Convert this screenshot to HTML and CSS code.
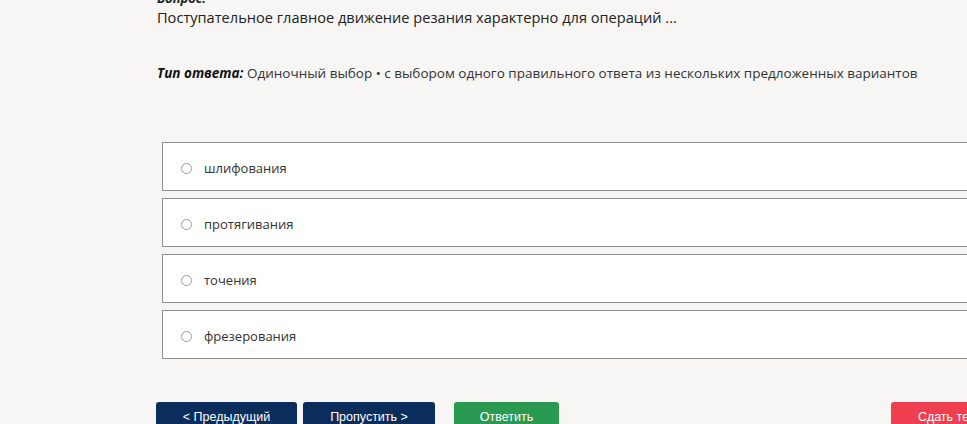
FILE: index.html
```html
<!DOCTYPE html>
<html lang="ru">
<head>
<meta charset="utf-8">
<link rel="stylesheet" href="styles.css">
</head>
<body>
<div class="page">
  <div class="label">Вопрос:</div>
  <div class="question">Поступательное главное движение резания характерно для операций ...</div>
  <div class="type"><b><i>Тип ответа:</i></b> Одиночный выбор • с выбором одного правильного ответа из нескольких предложенных вариантов</div>
  <div class="options">
    <label class="option"><span class="radio"></span><span>шлифования</span></label>
    <label class="option"><span class="radio"></span><span>протягивания</span></label>
    <label class="option"><span class="radio"></span><span>точения</span></label>
    <label class="option"><span class="radio"></span><span>фрезерования</span></label>
  </div>
  <div class="actions">
    <button class="btn btn-navy btn-prev">&lt; Предыдущий</button>
    <button class="btn btn-navy btn-skip">Пропустить &gt;</button>
    <button class="btn btn-green">Ответить</button>
    <button class="btn btn-red">Сдать тест</button>
  </div>
</div>
</body>
</html>
```
FILE: styles.css
```css
html, body {
  margin: 0;
  padding: 0;
  background: #f7f6f4;
  overflow: hidden;
}
body {
  font-family: "Open Sans", "Noto Sans", sans-serif;
  color: #222;
}
.page {
  width: 851px;
  margin-left: 157px;
  margin-top: -10px;
}
.label {
  font-size: 13px;
  font-weight: bold;
  font-style: italic;
  line-height: 16px;
  color: #222;
}
.question {
  font-size: 14.6px;
  line-height: 22px;
  color: #222;
}
.type {
  margin-top: 36px;
  font-size: 13.5px;
  line-height: 18px;
  color: #333;
}
.type b {
  color: #111;
}
.options {
  margin-top: 60px;
  margin-left: 5px;
  display: flex;
  flex-direction: column;
  gap: 7px;
}
.option {
  box-sizing: border-box;
  height: 49px;
  border: 1px solid #8e8e8e;
  background: #fff;
  display: flex;
  align-items: center;
  padding: 3px 0 0 18px;
  font-size: 13px;
  color: #333;
}
.radio {
  width: 9px;
  height: 9px;
  border: 1px solid #9a9a9a;
  border-radius: 50%;
  margin-right: 12px;
  background: #fff;
}
.actions {
  margin-top: 43px;
  margin-left: -1px;
  display: flex;
  gap: 6px;
}
.btn {
  height: 30px;
  border: none;
  border-radius: 3px;
  color: #fff;
  font-family: "Liberation Sans", Arial, sans-serif;
  font-size: 12.5px;
  padding: 0;
}
.btn-navy {
  background: #0b2d5b;
}
.btn-prev {
  width: 141px;
}
.btn-skip {
  width: 132px;
}
.btn-green {
  background: #2a9a52;
  width: 105px;
  margin-left: 13px;
}
.btn-red {
  background: #ef3e4f;
  width: 117px;
  margin-left: auto;
}
```
